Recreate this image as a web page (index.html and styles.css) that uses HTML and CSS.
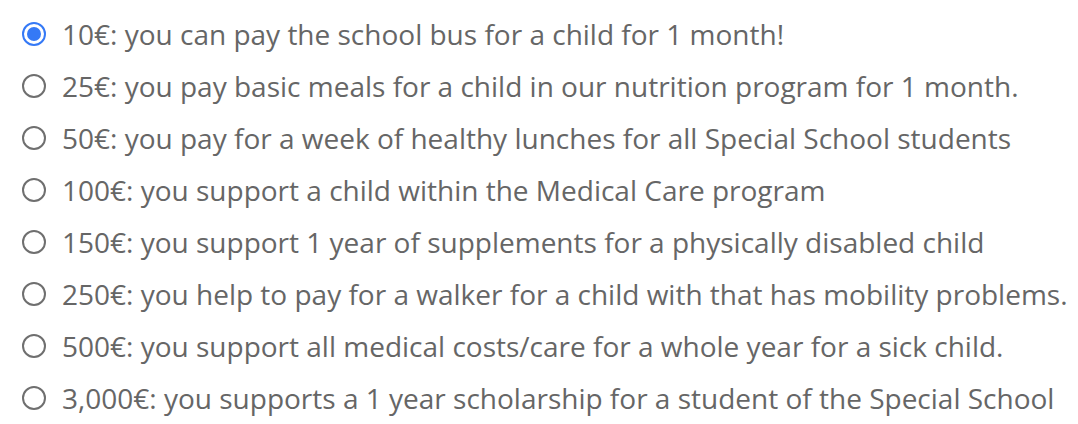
FILE: index.html
```html
<!DOCTYPE html>
<html>
<head>
<meta charset="utf-8">
<link rel="stylesheet" href="styles.css">
</head>
<body>
<form class="options">
  <label class="option"><input type="radio" name="amount" checked><span class="radio"></span><span class="text">10€: you can pay the school bus for a child for 1 month!</span></label>
  <label class="option"><input type="radio" name="amount"><span class="radio"></span><span class="text">25€: you pay basic meals for a child in our nutrition program for 1 month.</span></label>
  <label class="option"><input type="radio" name="amount"><span class="radio"></span><span class="text">50€: you pay for a week of healthy lunches for all Special School students</span></label>
  <label class="option"><input type="radio" name="amount"><span class="radio"></span><span class="text">100€: you support a child within the Medical Care program</span></label>
  <label class="option"><input type="radio" name="amount"><span class="radio"></span><span class="text">150€: you support 1 year of supplements for a physically disabled child</span></label>
  <label class="option"><input type="radio" name="amount"><span class="radio"></span><span class="text">250€: you help to pay for a walker for a child with that has mobility problems.</span></label>
  <label class="option"><input type="radio" name="amount"><span class="radio"></span><span class="text">500€: you support all medical costs/care for a whole year for a sick child.</span></label>
  <label class="option"><input type="radio" name="amount"><span class="radio"></span><span class="text">3,000€: you supports a 1 year scholarship for a student of the Special School</span></label>
</form>
</body>
</html>
```
FILE: styles.css
```css
html, body {
  margin: 0;
  padding: 0;
  background: #ffffff;
}
.options {
  display: flex;
  flex-direction: column;
  padding: 8px 0 0 22px;
}
.option {
  display: flex;
  align-items: center;
  height: 52px;
  font-family: "Open Sans", sans-serif;
  font-size: 28px;
  color: #666666;
  white-space: nowrap;
}
.option input {
  display: none;
}
.radio {
  box-sizing: border-box;
  width: 24px;
  height: 24px;
  border-radius: 50%;
  border: 2px solid #6f6f6f;
  margin-right: 16px;
  flex: none;
  position: relative;
}
.option input:checked + .radio {
  border-color: #3579f6;
}
.option input:checked + .radio::after {
  content: "";
  position: absolute;
  left: 3px;
  top: 3px;
  width: 14px;
  height: 14px;
  border-radius: 50%;
  background: #3579f6;
}
```
